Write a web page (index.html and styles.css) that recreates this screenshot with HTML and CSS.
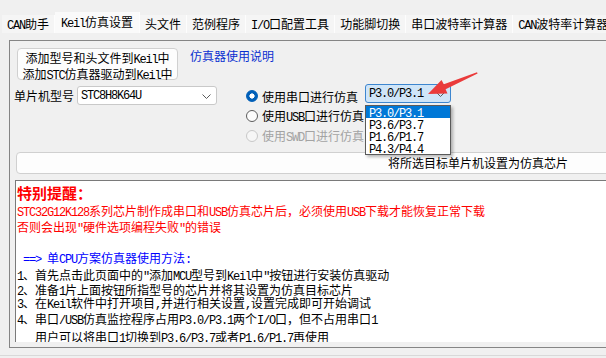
FILE: index.html
```html
<!DOCTYPE html>
<html lang="zh-CN">
<head>
<meta charset="utf-8">
<title>Keil仿真设置</title>
<link rel="stylesheet" href="styles.css">
</head>
<body>
<div class="tabs">
  <div class="tab"><span class="en">CAN</span>助手</div>
  <div class="tab active"><span class="en">Keil</span>仿真设置</div>
  <div class="tab">头文件</div>
  <div class="tab">范例程序</div>
  <div class="tab"><span class="en">I/O</span>口配置工具</div>
  <div class="tab">功能脚切换</div>
  <div class="tab">串口波特率计算器</div>
  <div class="tab"><span class="en">CAN</span>波特率计算器</div>
</div>

<div class="panel">
  <div class="row-top">
    <div class="btn btn-add">添加型号和头文件到<span class="en">Keil</span>中<br>添加<span class="en">STC</span>仿真器驱动到<span class="en">Keil</span>中</div>
    <span class="link">仿真器使用说明</span>
  </div>

  <div class="row-mid">
    <div class="mcu">
      <span class="label">单片机型号</span>
      <div class="combo mcu-combo">
        <span class="en">STC8H8K64U</span>
        <svg class="chev" width="9" height="5" viewBox="0 0 9 5"><path d="M0.5 0.5 L4.5 4.5 L8.5 0.5" fill="none" stroke="#5a5a5a" stroke-width="1"/></svg>
      </div>
    </div>

    <div class="radios">
      <div class="radio-row first">
        <span class="radio on"></span>
        <span class="rlabel">使用串口进行仿真</span>
        <div class="port">
          <div class="combo port-combo">
            <span class="en">P3.0/P3.1</span>
            <svg class="chev" width="9" height="5" viewBox="0 0 9 5"><path d="M0.5 0.5 L4.5 4.5 L8.5 0.5" fill="none" stroke="#5a5a5a" stroke-width="1"/></svg>
          </div>
          <div class="droplist">
            <div class="item sel"><span class="en">P3.0/P3.1</span></div>
            <div class="item"><span class="en">P3.6/P3.7</span></div>
            <div class="item"><span class="en">P1.6/P1.7</span></div>
            <div class="item"><span class="en">P4.3/P4.4</span></div>
          </div>
        </div>
      </div>
      <div class="radio-row">
        <span class="radio"></span>
        <span class="rlabel">使用<span class="en">USB</span>口进行仿真</span>
      </div>
      <div class="radio-row disabled">
        <span class="radio off"></span>
        <span class="rlabel">使用<span class="en">SWD</span>口进行仿真</span>
      </div>
    </div>
  </div>

  <div class="btn set-btn">将所选目标单片机设置为仿真芯片</div>

  <div class="notes">
    <div class="ln red title h21">特别提醒：</div>
    <div class="ln red h15"><span class="en">STC32G12K128</span>系列芯片制作成串口和<span class="en">USB</span>仿真芯片后，必须使用<span class="en">USB</span>下载才能恢复正常下载</div>
    <div class="ln red h17">否则会出现<span class="en">"</span>硬件选项编程失败<span class="en">"</span>的错误</div>
    <div class="ln h15"><span class="en"> </span></div>
    <div class="ln blue h16"><span class="en"> ==> </span>单<span class="en">CPU</span>方案仿真器使用方法<span class="en">:</span></div>
    <div class="ln h17"><span class="en">1</span>、首先点击此页面中的<span class="en">"</span>添加<span class="en">MCU</span>型号到<span class="en">Keil</span>中<span class="en">"</span>按钮进行安装仿真驱动</div>
    <div class="ln h13"><span class="en">2</span>、准备<span class="en">1</span>片上面按钮所指型号的芯片并将其设置为仿真目标芯片</div>
    <div class="ln h14"><span class="en">3</span>、在<span class="en">Keil</span>软件中打开项目<span class="en">,</span>并进行相关设置<span class="en">,</span>设置完成即可开始调试</div>
    <div class="ln h18"><span class="en">4</span>、串口<span class="en">/USB</span>仿真监控程序占用<span class="en">P3.0/P3.1</span>两个<span class="en">I/O</span>口，但不占用串口<span class="en">1</span></div>
    <div class="ln h18"><span class="en">   </span>用户可以将串口<span class="en">1</span>切换到<span class="en">P3.6/P3.7</span>或者<span class="en">P1.6/P1.7</span>再使用</div>
  </div>
</div>

<div class="status"></div>

<svg class="arrow" width="606" height="358" viewBox="0 0 606 358">
  <polygon points="428,94 441.5,80 443.8,84.3 477,72.3 477.6,73.6 445.6,89.2 447.5,93.4" fill="#ea3b3b"/>
</svg>
</body>
</html>
```

FILE: styles.css
```css
* {
  box-sizing: border-box;
  margin: 0;
  padding: 0;
}

html, body {
  width: 606px;
  height: 358px;
  overflow: hidden;
}

body {
  position: relative;
  background: #f0f0f0;
  color: #000;
  font-family: "Noto Sans CJK SC", "Noto Sans", sans-serif;
  font-size: 12px;
}

.en {
  font-family: "Liberation Mono", "DejaVu Sans Mono", monospace;
  font-size: 12px;
  letter-spacing: -1.2px;
}

/* ---------- tabs ---------- */
.tabs {
  display: flex;
  align-items: flex-end;
  height: 33px;
  padding-left: 2px;
  white-space: nowrap;
}

.tab {
  flex: none;
  height: 18px;
  line-height: 18px;
  padding: 0 5px;
  background: #f5f5f5;
  border-right: 1px solid #fdfdfd;
}

.tab.active {
  height: 21px;
  line-height: 20px;
  padding: 0 6px;
  background: #fafafa;
}

/* ---------- panel ---------- */
.panel {
  display: flex;
  flex-direction: column;
  width: 980px;
  height: 308px;
  margin: 7px 0 0 9px;
  border: 1px solid #858585;
  border-right: none;
}

.btn {
  flex: none;
  background: #fdfdfd;
  border: 1px solid #d0d0d0;
  border-radius: 4px;
  text-align: center;
  white-space: nowrap;
}

.row-top {
  display: flex;
  align-items: flex-start;
  margin-top: 7px;
}

.btn-add {
  width: 161px;
  height: 32px;
  margin-left: 7px;
  padding-top: 2px;
  line-height: 13px;
}

.link {
  margin: 2px 0 0 12px;
  line-height: 12px;
  color: #0a2fd0;
}

.row-mid {
  display: flex;
  align-items: flex-start;
  margin-top: 4px;
  height: 62px;
}

.mcu {
  display: flex;
  align-items: center;
  height: 19px;
  margin: 2px 0 0 4px;
}

.label {
  width: 60px;
  white-space: nowrap;
}

.combo {
  display: flex;
  align-items: center;
  justify-content: space-between;
  height: 19px;
  padding: 0 5px 0 3px;
  border-radius: 3px;
  white-space: nowrap;
}

.mcu-combo {
  width: 140px;
  margin-left: 3px;
  background: #fff;
  border: 1px solid #c9c9c9;
}

.chev {
  flex: none;
  margin-top: 2px;
}

.radios {
  display: flex;
  flex-direction: column;
  margin-left: 29px;
}

.radio-row {
  display: flex;
  align-items: center;
  height: 20px;
  white-space: nowrap;
}

.radio-row.first {
  height: 22px;
  padding-top: 2px;
}

.radio {
  flex: none;
  width: 12px;
  height: 12px;
  margin-right: 4px;
  border: 1px solid #5c5c5c;
  border-radius: 50%;
  background: #fcfcfc;
}

.radio.on {
  border-color: #005fb8;
  background: radial-gradient(circle, #fff 0 2.3px, #005fb8 2.9px);
}

.radio.off {
  border-color: #c8c8c8;
  background: #f6f6f6;
}

.radio-row.disabled {
  color: #a3a3a3;
}

.port {
  position: relative;
  align-self: flex-start;
  margin: -2px 0 0 7px;
  z-index: 2;
}

.port-combo {
  width: 86px;
  background: #cfe5f8;
  border: 1px solid #3d86cf;
}

.droplist {
  position: absolute;
  top: 21px;
  left: 0;
  width: 86px;
  background: #fff;
  border: 1px solid #5a5a5a;
  box-shadow: 2px 2px 3px rgba(0, 0, 0, 0.28);
}

.item {
  height: 12px;
  line-height: 12px;
  padding-left: 3px;
  white-space: nowrap;
}

.item.sel {
  background: #0078d7;
  color: #fff;
}

.set-btn {
  width: 924px;
  height: 22px;
  margin: 6px 0 0 6px;
  line-height: 20px;
}

/* ---------- notes ---------- */
.notes {
  flex: none;
  width: 940px;
  height: 162px;
  margin: 6px 0 0 5px;
  padding: 1px 0 0 1px;
  background: #fff;
  border-top: 1px solid #7a7a7a;
  border-left: 1px solid #7a7a7a;
  overflow: hidden;
}

.ln {
  white-space: pre;
}

.red { color: #ff0000; }
.blue { color: #0000ff; }

.title {
  font-size: 15px;
  font-weight: bold;
}

.h13 { height: 13px; line-height: 13px; }
.h14 { height: 14px; line-height: 14px; }
.h15 { height: 15px; line-height: 15px; }
.h16 { height: 16px; line-height: 16px; }
.h17 { height: 17px; line-height: 17px; }
.h18 { height: 18px; line-height: 18px; }
.h21 { height: 21px; line-height: 21px; }

.status {
  margin-top: 7px;
  border-top: 1px solid #d9d9d9;
}

.arrow {
  position: absolute;
  left: 0;
  top: 0;
  pointer-events: none;
  z-index: 5;
}
```
